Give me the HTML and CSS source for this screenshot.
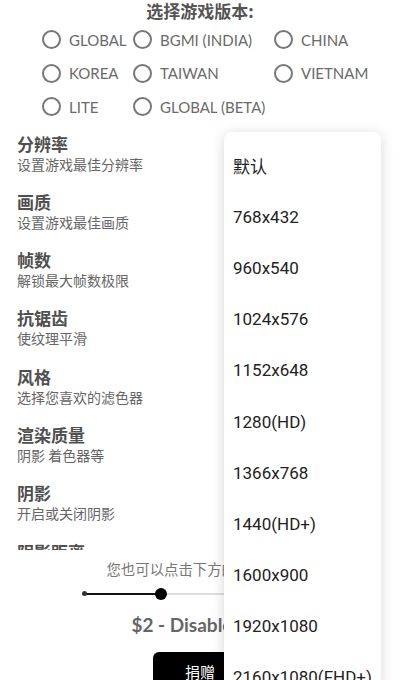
FILE: index.html
```html
<!DOCTYPE html>
<html lang="zh">
<head>
<meta charset="utf-8">
<link rel="stylesheet" href="styles.css">
</head>
<body>
<div class="page">
  <div class="heading">选择游戏版本:</div>
  <div class="radios">
    <label class="radio"><span class="dot"></span>GLOBAL</label>
    <label class="radio"><span class="dot"></span>BGMI (INDIA)</label>
    <label class="radio"><span class="dot"></span>CHINA</label>
    <label class="radio"><span class="dot"></span>KOREA</label>
    <label class="radio"><span class="dot"></span>TAIWAN</label>
    <label class="radio"><span class="dot"></span>VIETNAM</label>
    <label class="radio"><span class="dot"></span>LITE</label>
    <label class="radio"><span class="dot"></span>GLOBAL (BETA)</label>
  </div>
  <div class="settings">
    <div class="item"><div class="title">分辨率</div><div class="sub">设置游戏最佳分辨率</div></div>
    <div class="item"><div class="title">画质</div><div class="sub">设置游戏最佳画质</div></div>
    <div class="item"><div class="title">帧数</div><div class="sub">解锁最大帧数极限</div></div>
    <div class="item"><div class="title">抗锯齿</div><div class="sub">使纹理平滑</div></div>
    <div class="item"><div class="title">风格</div><div class="sub">选择您喜欢的滤色器</div></div>
    <div class="item"><div class="title">渲染质量</div><div class="sub">阴影 着色器等</div></div>
    <div class="item"><div class="title">阴影</div><div class="sub">开启或关闭阴影</div></div>
    <div class="item"><div class="title">阴影距离</div><div class="sub">设置阴影距离</div></div>
  </div>
  <div class="note">您也可以点击下方的按钮捐赠</div>
  <div class="slider"><span class="fill"></span><span class="thumb"></span></div>
  <div class="price">$2 - Disable Ads</div>
  <div class="btn-row"><button class="btn">捐赠</button></div>
</div>
<div class="menu">
  <div class="mi">默认</div>
  <div class="mi">768x432</div>
  <div class="mi">960x540</div>
  <div class="mi">1024x576</div>
  <div class="mi">1152x648</div>
  <div class="mi">1280(HD)</div>
  <div class="mi">1366x768</div>
  <div class="mi">1440(HD+)</div>
  <div class="mi">1600x900</div>
  <div class="mi">1920x1080</div>
  <div class="mi">2160x1080(FHD+)</div>
</div>
</body>
</html>
```
FILE: styles.css
```css
html, body {
  margin: 0;
  padding: 0;
  background: #fff;
  height: 680px;
  overflow: hidden;
}
body {
  font-family: "Noto Sans CJK SC", sans-serif;
  position: relative;
}
.page {
  display: flex;
  flex-direction: column;
}
.heading {
  text-align: center;
  font-size: 17px;
  font-weight: 700;
  color: #555;
  line-height: 22px;
  margin-top: 0;
}
.radios {
  display: grid;
  grid-template-columns: 91px 141px auto;
  padding-left: 42px;
  margin-top: 1px;
}
.radio {
  display: flex;
  align-items: center;
  gap: 8px;
  height: 33.5px;
  font-family: Lato, "Noto Sans CJK SC", sans-serif;
  font-size: 15px;
  color: #6a6a6a;
  white-space: nowrap;
}
.dot {
  width: 15px;
  height: 15px;
  border: 2px solid #777;
  border-radius: 50%;
  flex: none;
}
.settings {
  height: 425px;
  overflow: hidden;
  padding-left: 17px;
  padding-top: 9px;
  box-sizing: border-box;
  margin-top: 1px;
}
.item {
  height: 58.3px;
}
.title {
  font-size: 17px;
  font-weight: 700;
  color: #505050;
  line-height: 20px;
}
.sub {
  font-size: 14px;
  color: #666;
  line-height: 20px;
}
.note {
  text-align: center;
  font-size: 14.4px;
  color: #777;
  line-height: 20px;
  margin-top: 9px;
}
.slider {
  position: relative;
  width: 234px;
  height: 2px;
  background: #ddd;
  margin: 14px auto 0;
}
.fill {
  position: absolute;
  left: 0;
  top: 0;
  height: 2px;
  width: 78px;
  background: #111;
}
.fill::before {
  content: "";
  position: absolute;
  left: -1px;
  top: -1.5px;
  width: 5px;
  height: 5px;
  border-radius: 50%;
  background: #333;
}
.thumb {
  position: absolute;
  left: 72px;
  top: -5px;
  width: 12px;
  height: 12px;
  border-radius: 50%;
  background: #000;
}
.price {
  text-align: center;
  font-family: Lato, sans-serif;
  font-weight: 700;
  font-size: 19px;
  color: #666;
  line-height: 22px;
  margin-top: 19px;
}
.btn-row {
  display: flex;
  justify-content: center;
  margin-top: 16px;
}
.btn {
  width: 94px;
  height: 40px;
  background: #000;
  color: #fff;
  border: none;
  border-radius: 6px;
  font-family: "Noto Sans CJK SC", sans-serif;
  font-size: 15px;
  padding: 0;
}
.menu {
  position: absolute;
  left: 224px;
  top: 132px;
  width: 157px;
  background: #fff;
  border-radius: 8px;
  box-shadow: 0 2px 14px rgba(0,0,0,0.16);
  padding-top: 8px;
  padding-bottom: 8px;
}
.mi {
  height: 51.2px;
  display: flex;
  align-items: center;
  padding-left: 9px;
  font-family: Roboto, "Noto Sans CJK SC", sans-serif;
  font-size: 17px;
  color: #222;
  white-space: nowrap;
}
```
